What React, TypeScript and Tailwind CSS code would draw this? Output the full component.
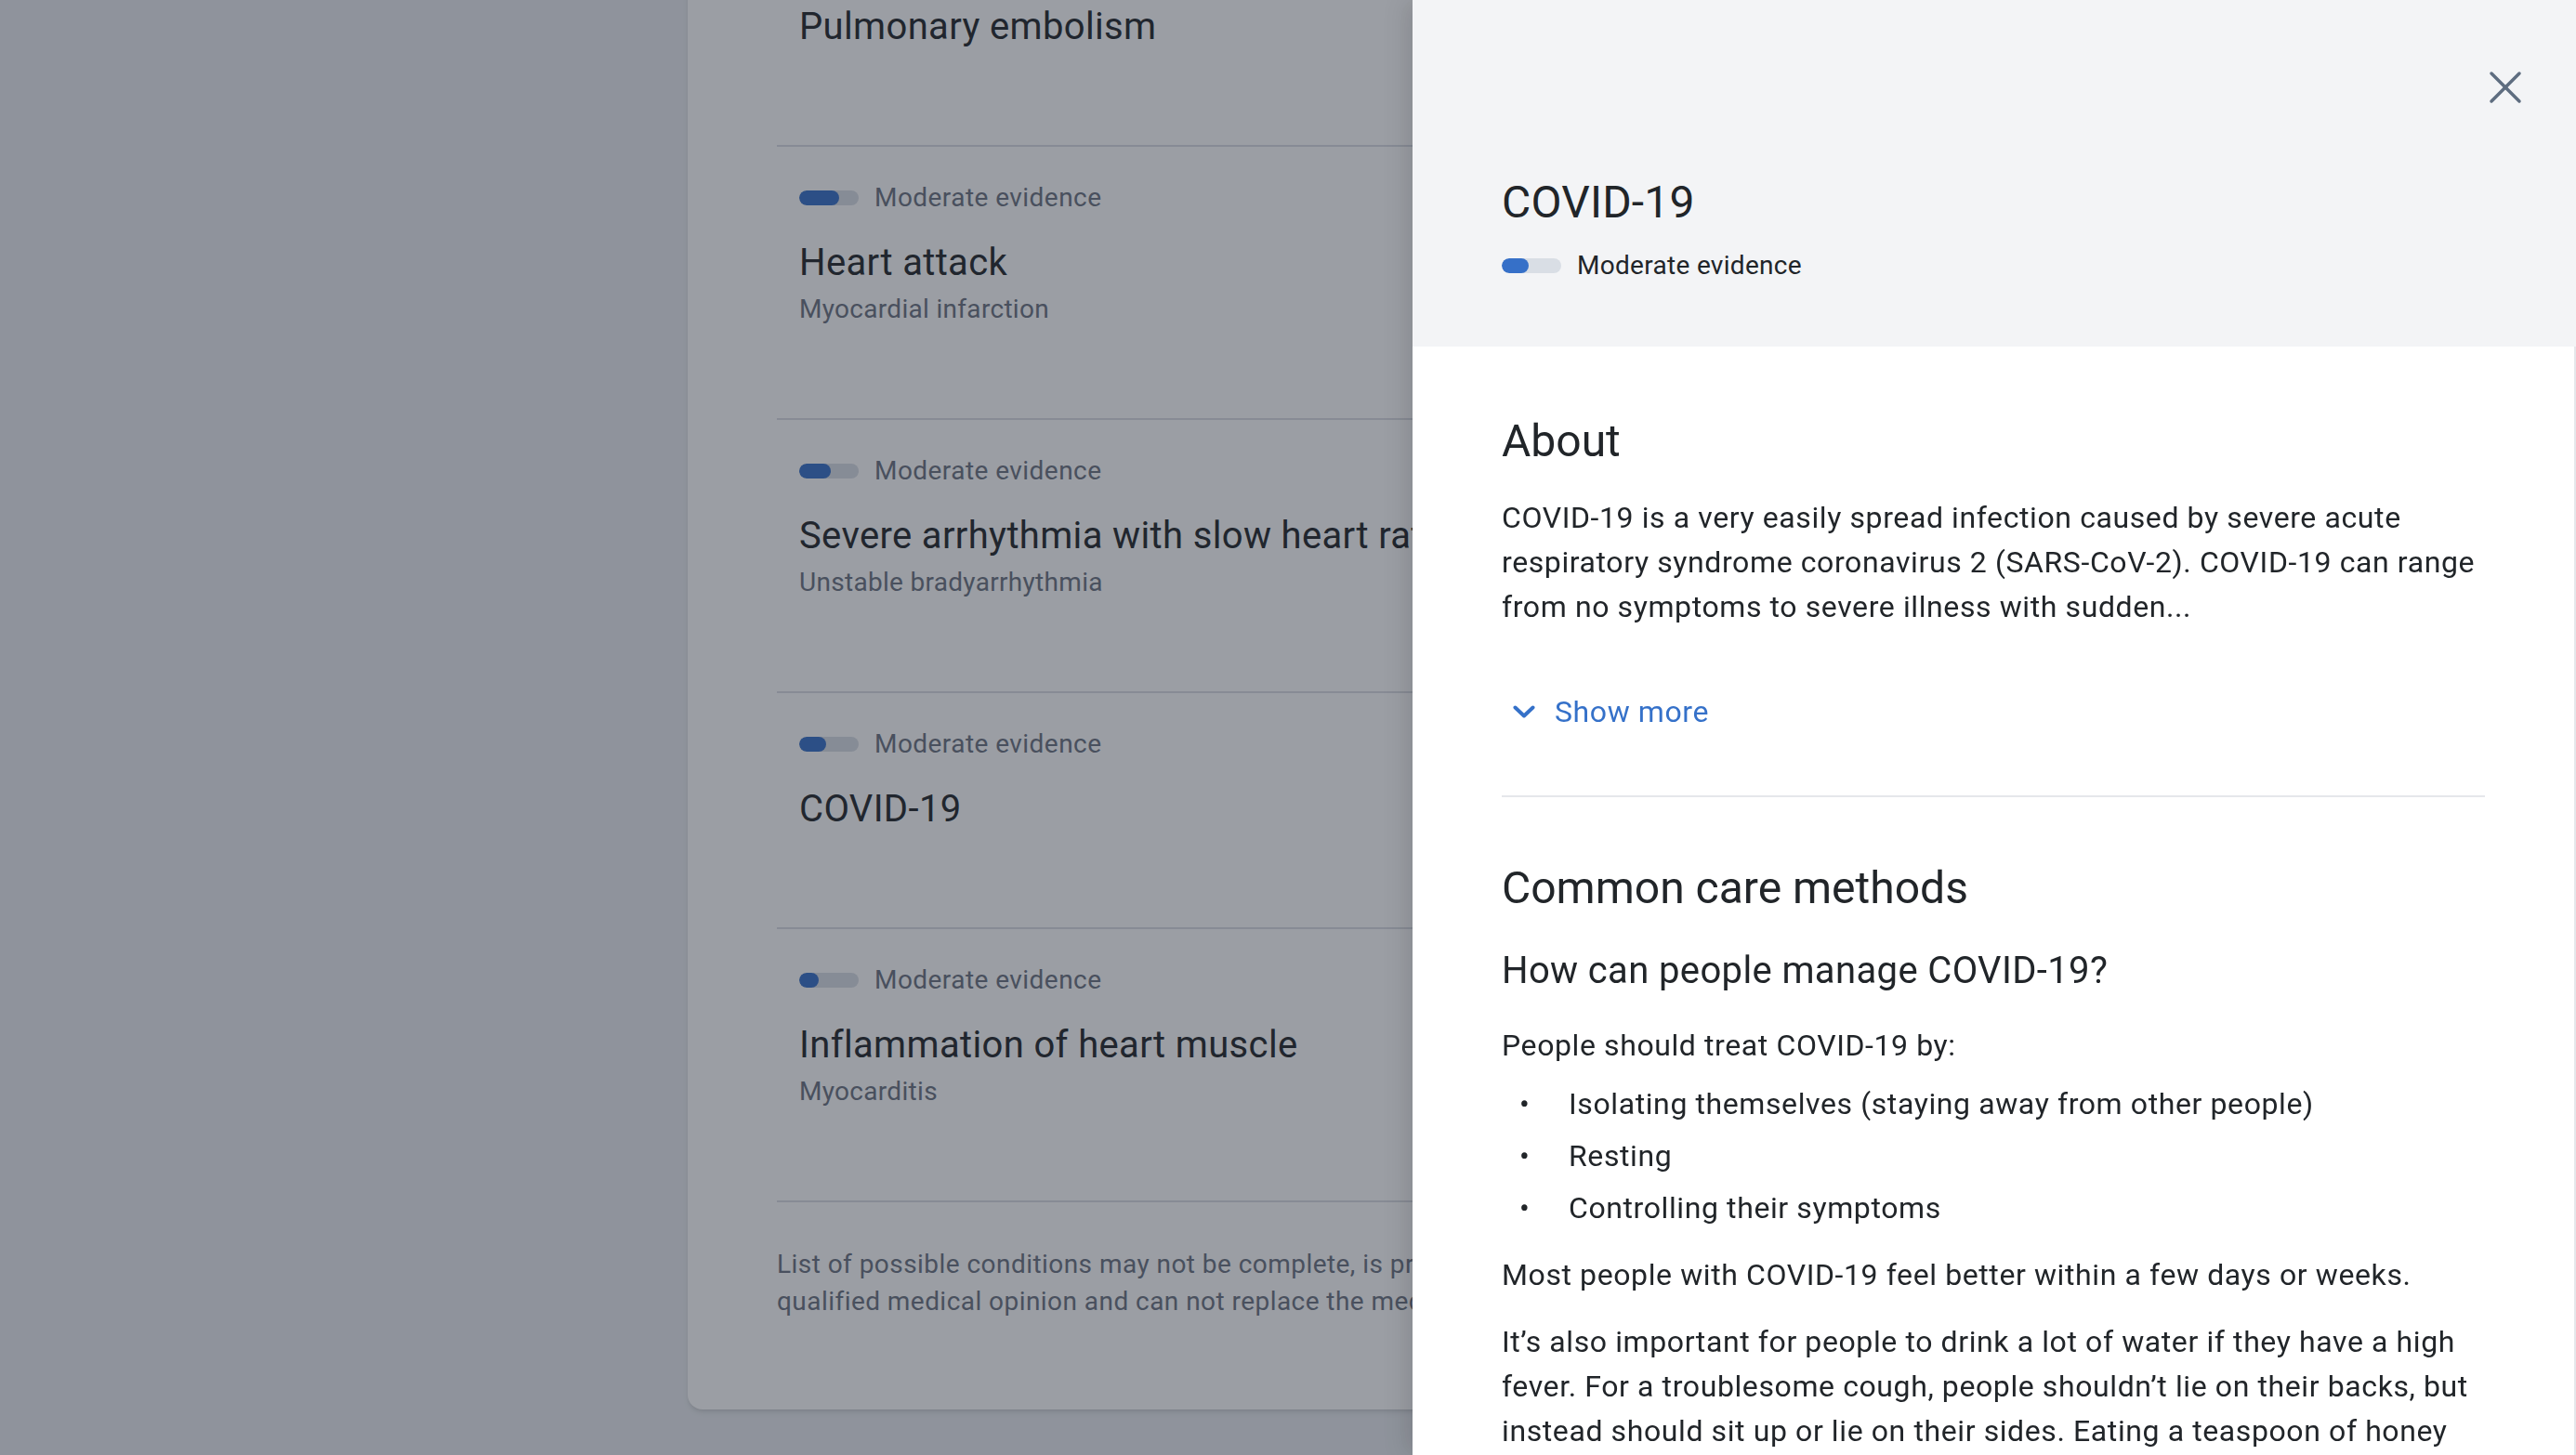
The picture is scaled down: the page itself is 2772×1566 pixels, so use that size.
import { useState } from "react";

const conditions = [
  { name: "Pulmonary embolism", fill: 40 },
  { name: "Heart attack", sub: "Myocardial infarction", fill: 43 },
  { name: "Severe arrhythmia with slow heart rate", sub: "Unstable bradyarrhythmia", fill: 34 },
  { name: "COVID-19", fill: 29 },
  { name: "Inflammation of heart muscle", sub: "Myocarditis", fill: 21 },
];

function EvidenceBar({ fill }: { fill: number }) {
  return (
    <div className="w-[64px] h-[16px] rounded-full bg-[#d9dee5] overflow-hidden shrink-0">
      <div className="h-full rounded-full bg-[#3670c8]" style={{ width: fill }} />
    </div>
  );
}

function ConditionRow({ item, first }: { item: any; first: boolean }) {
  return (
    <div className={first ? "px-[24px] pt-[35px] pb-[103px]" : "px-[24px] pt-[35px] pb-[103px] border-t-2 border-[#dadde3]"}>
      <div className="flex items-center gap-[17px] h-[40px]">
        <EvidenceBar fill={item.fill} />
        <span className="text-[28px] leading-[40px] text-[#6b7280] tracking-[0.45px]">Moderate evidence</span>
      </div>
      <h3 className="mt-[26px] text-[40px] leading-[48px] text-[#212529] whitespace-nowrap tracking-[0.35px]">{item.name}</h3>
      {item.sub && (
        <p className="mt-[12px] text-[28px] leading-[28px] text-[#6b7280] tracking-[0.3px]">{item.sub}</p>
      )}
    </div>
  );
}

export default function App() {
  const [expanded, setExpanded] = useState(false);
  return (
    <div className="relative w-full h-screen overflow-hidden bg-[#e9ecf0] font-['Roboto','Noto_Sans',sans-serif]">
      {/* page underneath */}
      <div className="ml-[740px] mt-[-96px] w-[1292px] bg-white rounded-[16px] shadow-md px-[96px] pb-[96px]">
        {conditions.map((c, i) => (
          <ConditionRow key={c.name} item={c} first={i === 0} />
        ))}
        <p className="border-t-2 border-[#dadde3] pt-[47px] text-[28px] leading-[40px] text-[#6b7280] whitespace-nowrap tracking-[0.45px]">
          List of possible conditions may not be complete, is provided solely for informational purposes, is not a
          <br />
          qualified medical opinion and can not replace the medical consultation.
        </p>
      </div>

      {/* overlay */}
      <div className="fixed inset-0 bg-[#212936]/45" />

      {/* drawer */}
      <aside className="fixed top-0 right-0 h-full w-[1252px] bg-white flex flex-col shadow-[-8px_0_24px_rgba(0,0,0,0.12)] text-[#212529]">
        <header className="relative h-[373px] shrink-0 bg-[#f3f4f6] px-[96px] pt-[190px]">
          <button className="absolute top-[76px] left-[1158px] w-[36px] h-[36px] flex items-center justify-center">
            <svg width="36" height="36" viewBox="0 0 36 36" fill="none" stroke="#5e6d80" strokeWidth="3.5" strokeLinecap="round">
              <path d="M3 3 L33 33" />
              <path d="M33 3 L3 33" />
            </svg>
          </button>
          <h1 className="text-[48px] leading-[56px] tracking-[0.2px]">COVID-19</h1>
          <div className="mt-[20px] flex items-center gap-[17px] h-[40px]">
            <EvidenceBar fill={29} />
            <span className="text-[28px] leading-[40px] tracking-[0.3px]">Moderate evidence</span>
          </div>
        </header>

        <div className="flex-1 overflow-hidden border-r-2 border-[#e5e7eb] px-[96px]">
          <section className="pt-[74px] pb-[66px] border-b-2 border-[#e5e7eb]">
            <h2 className="text-[48px] leading-[56px]">About</h2>
            <p className="mt-[30px] text-[32px] leading-[48px] tracking-[0.6px]">
              COVID-19 is a very easily spread infection caused by severe acute respiratory syndrome coronavirus 2
              (SARS-CoV-2). COVID-19 can range from no symptoms to severe illness with sudden...
            </p>
            <button
              className="mt-[65px] h-[48px] flex items-center gap-[21px] pl-[12px] text-[32px] text-[#3571c9] tracking-[0.6px]"
              onClick={() => setExpanded(!expanded)}
            >
              <svg width="24" height="14" viewBox="0 0 24 14" fill="none" stroke="#3571c9" strokeWidth="4" strokeLinecap="round" strokeLinejoin="round">
                <path d="M2.5 2.5 L12 11.5 L21.5 2.5" />
              </svg>
              Show more
            </button>
          </section>

          <section className="pt-[70px]">
            <h2 className="text-[48px] leading-[56px]">Common care methods</h2>
            <h3 className="mt-[37px] text-[40px] leading-[48px] tracking-[0.37px]">How can people manage COVID-19?</h3>
            <p className="mt-[32px] text-[32px] leading-[48px] tracking-[0.6px]">People should treat COVID-19 by:</p>
            <ul className="mt-[15px] flex flex-col gap-[8px] text-[32px] leading-[48px] tracking-[0.6px]">
              {["Isolating themselves (staying away from other people)", "Resting", "Controlling their symptoms"].map((t) => (
                <li key={t} className="flex">
                  <span className="w-[72px] pl-[19px] shrink-0">•</span>
                  <span>{t}</span>
                </li>
              ))}
            </ul>
            <p className="mt-[24px] text-[32px] leading-[48px] tracking-[0.6px]">
              Most people with COVID-19 feel better within a few days or weeks.
            </p>
            <p className="mt-[24px] text-[32px] leading-[48px] tracking-[0.6px]">
              It’s also important for people to drink a lot of water if they have a high fever. For a troublesome
              cough, people shouldn’t lie on their backs, but instead should sit up or lie on their sides. Eating a
              teaspoon of honey may also help to ease a cough.
            </p>
          </section>
        </div>
      </aside>
    </div>
  );
}
